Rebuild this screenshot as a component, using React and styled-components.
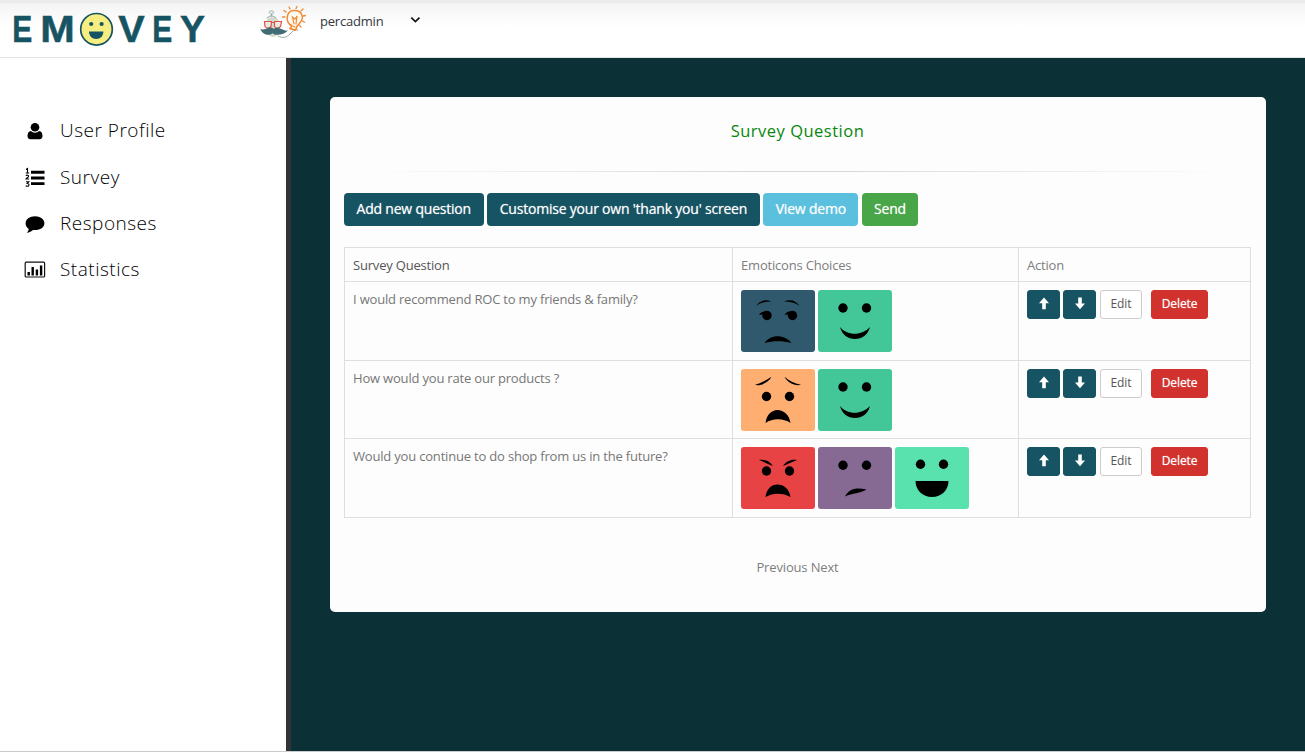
import React from "react";
import styled, { createGlobalStyle } from "styled-components";

const Global = createGlobalStyle`
  * { box-sizing: border-box; }
  html, body { margin: 0; padding: 0; background: #fff; overflow: hidden; }
  body { font-family: "Open Sans", "Noto Sans", sans-serif; font-size: 13px; color: #777; }
  button { font-family: inherit; margin: 0; cursor: pointer; }
  svg { display: block; flex: none; }
`;

const Page = styled.div`
  width: 1305px;
  height: 752px;
  display: flex;
  flex-direction: column;
  border-bottom: 1px solid #c8cacb;
`;

const Header = styled.header`
  height: 58px;
  flex: none;
  display: flex;
  align-items: flex-start;
  border-top: 3px solid #ebebeb;
  border-bottom: 1px solid #e2e3e3;
  background: linear-gradient(#f4f4f4, #ffffff 24px);
`;

const LogoBox = styled.div`
  width: 260px;
  padding: 5px 0 0 10px;
`;

const LogoText = styled.text`
  font-family: "Liberation Sans", Arial, sans-serif;
  font-weight: 700;
  font-size: 36px;
  fill: #175463;
  stroke: #175463;
  stroke-width: 0.5px;
`;

const Account = styled.div`
  display: flex;
  align-items: flex-start;
  color: #333640;
`;

const AccountName = styled.span`
  width: 90px;
  margin-left: 14px;
  padding-top: 9px;
  line-height: 18px;
  font-size: 13px;
  letter-spacing: -0.2px;
`;

const Chevron = styled.svg`
  margin-top: 13px;
`;

const Body = styled.div`
  flex: 1;
  display: flex;
  min-height: 0;
`;

const Sidebar = styled.nav`
  width: 291px;
  flex: none;
  padding: 50px 0 0 24px;
  border-right: 5px solid #313338;
  background: #fff;
`;

const MenuItem = styled.a`
  height: 46.4px;
  display: flex;
  align-items: center;
  gap: 14px;
  color: #000;
  font-size: 19px;
  font-weight: 300;
  letter-spacing: 0.5px;
  white-space: nowrap;
`;

const MenuLabel = styled.span`
  padding-bottom: 2px;
`;

const Main = styled.main`
  flex: 1;
  padding: 39px 39px 0;
  background: #0b3136;
`;

const Card = styled.section`
  width: 936px;
  height: 515px;
  padding: 24px 15px 0 14px;
  border-radius: 5px;
  background: #fdfdfd;
`;

const Title = styled.h1`
  margin: 0;
  font-size: 16.5px;
  line-height: 20px;
  font-weight: 400;
  letter-spacing: 0.5px;
  text-align: center;
  color: #0a860f;
`;

const Divider = styled.div`
  height: 1px;
  margin: 30px 0 21px;
  background: linear-gradient(to right, transparent 2%, #d8d8d8 45%, #d8d8d8 55%, transparent 98%);
`;

const Toolbar = styled.div`
  display: flex;
  gap: 3.5px;
`;

const ToolButton = styled.button`
  width: ${(p) => p.$w}px;
  height: 33px;
  padding: 0 0 3px;
  border: 0;
  border-radius: 4px;
  background: ${(p) => p.$bg};
  color: #fff;
  font-size: 14px;
  letter-spacing: -0.21px;
  white-space: nowrap;
  text-shadow: 0 0 1px rgba(255, 255, 255, 0.6);
`;

const Table = styled.table`
  width: 907px;
  margin-top: 21px;
  table-layout: fixed;
  border-collapse: collapse;
`;

const Row = styled.tr`
  height: ${(p) => p.$h}px;
`;

const Cell = styled.td`
  padding: 8px 8px 7px;
  border: 1px solid #dedede;
  vertical-align: top;
  line-height: 18px;
  letter-spacing: -0.19px;
  white-space: nowrap;
`;

const HeadCell = styled(Cell).attrs({ as: "th" })`
  font-weight: 400;
  text-align: left;
  color: ${(p) => (p.$dark ? "#555" : "#7d7d7d")};
`;

const Faces = styled.div`
  display: flex;
  gap: 3.5px;
`;

const FaceTile = styled.div`
  width: 73.7px;
  height: 62px;
  border-radius: 3px;
  overflow: hidden;
  background: ${(p) => p.$bg};
`;

const Actions = styled.div`
  display: flex;
  gap: 3px;
`;

const ActionButton = styled.button`
  width: ${(p) => p.$w}px;
  height: 29px;
  display: flex;
  align-items: center;
  justify-content: center;
  padding: 0 0 2px;
  margin-left: ${(p) => p.$gap || 0}px;
  border: 1px solid ${(p) => p.$line || p.$bg};
  border-radius: 3px;
  background: ${(p) => p.$bg};
  color: ${(p) => p.$fg || "#fff"};
  font-size: 12px;
  letter-spacing: -0.1px;
  text-shadow: ${(p) => (p.$fg ? "none" : "0 0 1px rgba(255,255,255,.6)")};
`;

const Pager = styled.div`
  margin-top: 40px;
  line-height: 18px;
  letter-spacing: -0.15px;
  text-align: center;
  color: #7d7d7d;
`;

function Logo() {
  const letters = [
    ["E", 12.3, 20],
    ["M", 40.2, 34.5],
    ["V", 118.2, 26.4],
    ["E", 152.3, 20],
    ["Y", 180.1, 25],
  ];
  return (
    <svg width="205" height="44" viewBox="10 8 205 44">
      {letters.map(([ch, x, w]) => (
        <LogoText key={x} x={x} y="42" textLength={w} lengthAdjust="spacingAndGlyphs">
          {ch}
        </LogoText>
      ))}
      <circle cx="96.5" cy="29.3" r="15.8" fill="#f6ee81" stroke="#175463" strokeWidth="1.7" />
      <circle cx="91.2" cy="24" r="2.1" fill="#175463" />
      <circle cx="101.6" cy="24" r="2.1" fill="#175463" />
      <path d="M89 31.5h14.4c0 4.5-3 7.5-7.2 7.5s-7.2-3-7.2-7.5z" fill="#175463" />
    </svg>
  );
}

function Avatar() {
  return (
    <svg width="46" height="37" viewBox="260 3 46 37" fill="none" strokeLinecap="round">
      <path d="M266 25c0-5 2-8 6-8s8 3 8 8v5c-1 4-4 7-7 7s-6-3-7-7z" fill="#d3dcc9" />
      <path d="M271.500 16v-2c-3-1-3-3 0-3s3 3 0 3M267 18l3-2h3l3 2" stroke="#8faaa8" strokeWidth="1" />
      <path d="M264.500 21.500h7l-.5 5c-2 2-5 2-6 0zM274.500 21.500h7l-1 5c-2 2-5 2-6 0zM271.500 22.500h3" fill="#e5eee2" stroke="#e2504e" strokeWidth="1.200" />
      <path d="M260.300 28.800c3 1.800 6-.6 9-1.100 2-.4 3.500.3 4.500 1.300 1-1 3-1.600 5-.9 3.500 1 6.500 3.600 9 2.200 0 0-3 5-11 4.400-2 0-3-.5-4-1.500-2 1.500-4 1.800-6 1.500-3-.4-5.500-2.500-6.500-5.900z" fill="#426c75" />
      <path d="M278 36c5 3 9 1 12-2s4-5 8-4" stroke="#91aaa8" />
      <path d="M291.500 25.500c-6-3-6-14 2-15 8-1 11 7 7 11.500-2 2-4 4-5 8l-5-1z" stroke="#ef8b37" strokeWidth="1.500" fill="#fffaf0" />
      <path d="M290 25l5 2M289.500 28l5.500 2M294 24l-1.500-7 2.500 2 2-3-1 8" stroke="#ef8b37" strokeWidth="1.200" />
      <path d="M290 9l-1-2M296 8.500l1-2M301 11l2-2M303 16l3-.5M302.500 21l2 1.200M286 12l-2-1.500M285 17h-2.500M299 25l2 2" stroke="#f08a35" strokeWidth="1.300" />
    </svg>
  );
}

const menuIcons = {
  user: (
    <g>
      <circle cx="11" cy="7.300" r="4.300" />
      <path d="M7 11c1 1.100 2.300 1.700 4 1.700s3-.6 4-1.700c2.500.2 3.500 2.300 3.500 5.100 0 2-1 3.100-2.800 3.100H6.300c-1.800 0-2.800-1.100-2.800-3.100C3.500 13.300 4.500 11.200 7 11z" />
    </g>
  ),
  list: (
    <g>
      <path d="M7 3.800h13.500v2.900H7zM7 9.500h13.500v2.900H7zM7 15.200h13.500v2.900H7z" />
      <path
        d="M2 2.500l1.500-1V6M1.800 6h3.400M1.800 8.700c1-.9 2.800-.6 2.800.6 0 1.200-2.700 1.600-2.700 2.700h3.200M2 14.700h2.800l-1.500 1.700c2.500 0 2 2.900.1 2.900-.7 0-1.200-.2-1.700-.5"
        fill="none"
        stroke="#000"
        strokeWidth="1.100"
      />
    </g>
  ),
  comment: (
    <path d="M11 3.300c5.300 0 9.400 3 9.400 6.900s-4.100 6.900-9.400 6.900c-.7 0-1.400-.1-2-.2-1.600 1.500-3.500 2.500-6.200 2.800 1-1 1.700-2.200 1.900-3.800C2.700 14.600 1.600 12.600 1.600 10.200 1.600 6.300 5.700 3.300 11 3.300z" />
  ),
  chart: (
    <g>
      <rect x="1.200" y="3.200" width="19.400" height="14.800" rx="1" fill="none" stroke="#111" strokeWidth="1.200" />
      <path d="M3.500 13h2.400v3.500H3.500zM7.500 8h2.400v8.500H7.500zM11.700 10.500h2.400v6h-2.400zM15.900 6.500h2.400v10h-2.400z" />
    </g>
  ),
};

const menu = [
  ["user", "User Profile"],
  ["list", "Survey"],
  ["comment", "Responses"],
  ["chart", "Statistics"],
];

const faces = {
  smirk: {
    bg: "#31596d",
    art: (
      <g>
        <path d="M15 16c4-6 10-7 15.500-4.500C25 11.500 19 12.500 15 16zM43 11.500C49 9 55 10 58.500 16 54 12.500 49 11.500 43 11.500z" />
        <circle cx="26" cy="25.500" r="4.700" />
        <circle cx="51.500" cy="25.500" r="4.700" />
        <path d="M18 25c2-3.500 5-4 9-3.500l-3 4.500c-1-1.500-3-2-6-1zM43.500 25c2-3.500 5-4 9-3.500l-3 4.500c-1-1.500-3-2-6-1z" />
        <path d="M23.500 53C29 44 44 44 50.500 53 42 50.500 32 50.500 23.500 53z" />
      </g>
    ),
  },
  smile: {
    bg: "#43c799",
    art: (
      <g>
        <circle cx="25" cy="18" r="4.700" />
        <circle cx="48.500" cy="18" r="4.700" />
        <path d="M22 37c7 9 22 9 30 0-2 8-8 12-15 12s-13-4-15-12z" />
      </g>
    ),
  },
  worried: {
    bg: "#ffae71",
    art: (
      <g>
        <path d="M14 15.800c6-1.500 11-4.500 16.500-8C28 13 20 17.500 14 15.800zM43.500 7.800C48 11.500 53 14.500 60 15.800c-6 1.700-14-2.500-16.500-8z" />
        <circle cx="25.500" cy="27.500" r="4.700" />
        <circle cx="48.500" cy="27.500" r="4.700" />
        <path d="M24.500 54c1-8 6-13 12-13s12 5 13 13c-7-5-18-5-25 0z" />
      </g>
    ),
  },
  angry: {
    bg: "#e84344",
    art: (
      <g>
        <path d="M18 13c6-1 11.500 1.500 13.800 6C27 17 23 15 18 13zM42.200 19c2.300-4.500 8-7 13.800-6-5 2-9 4-13.800 6z" />
        <circle cx="25.500" cy="24" r="4.700" />
        <circle cx="48.500" cy="24" r="4.700" />
        <path d="M24.500 50c1-8 6-12.500 12-12.500s12 4.500 13 12.500c-7-4.500-18-4.500-25 0z" />
      </g>
    ),
  },
  unsure: {
    bg: "#866a94",
    art: (
      <g>
        <circle cx="25" cy="18.200" r="4.700" />
        <circle cx="48.500" cy="18.200" r="4.700" />
        <path d="M27 49.500c4-8 11-9.500 21.500-7-6 4-14 3.500-21.500 7z" />
      </g>
    ),
  },
  laugh: {
    bg: "#5ae2ae",
    art: (
      <g>
        <circle cx="25.500" cy="17.200" r="4.700" />
        <circle cx="48.500" cy="17.200" r="4.700" />
        <path d="M20.500 34h33c0 9-7 16-16.500 16s-16.500-7-16.500-16z" />
      </g>
    ),
  },
};

const questions = [
  { text: "I would recommend ROC to my friends & family?", h: 79, faces: ["smirk", "smile"] },
  { text: "How would you rate our products ?", h: 78, faces: ["worried", "smile"] },
  { text: "Would you continue to do shop from us in the future?", h: 79, faces: ["angry", "unsure", "laugh"] },
];

function Arrow({ down }) {
  return (
    <svg width="12" height="13" viewBox="0 0 12 13" fill="#fff">
      <path d={down ? "M4.200.500h3.600v6H11L6 12.300 1 6.500h3.200z" : "M4.200 12.300h3.600v-6H11L6 .5 1 6.300h3.200z"} />
    </svg>
  );
}

export default function App() {
  return (
    <>
      <Global />
      <Page>
        <Header>
          <LogoBox>
            <Logo />
          </LogoBox>
          <Account>
            <Avatar />
            <AccountName>percadmin</AccountName>
            <Chevron width="11" height="8" viewBox="0 0 11 8" fill="none">
              <path d="M1.300 1.600l4.100 4 4.100-4" stroke="#16171f" strokeWidth="1.800" />
            </Chevron>
          </Account>
        </Header>
        <Body>
          <Sidebar>
            {menu.map(([icon, label]) => (
              <MenuItem key={label}>
                <svg width="22" height="22" viewBox="0 0 22 22">
                  {menuIcons[icon]}
                </svg>
                <MenuLabel>{label}</MenuLabel>
              </MenuItem>
            ))}
          </Sidebar>
          <Main>
            <Card>
              <Title>Survey Question</Title>
              <Divider />
              <Toolbar>
                <ToolButton $w={139.5} $bg="#175463">Add new question</ToolButton>
                <ToolButton $w={272.8} $bg="#175463">Customise your own 'thank you' screen</ToolButton>
                <ToolButton $w={95} $bg="#5bc0de">View demo</ToolButton>
                <ToolButton $w={56.5} $bg="#48a548">Send</ToolButton>
              </Toolbar>
              <Table>
                <colgroup>
                  <col width="388" />
                  <col width="286" />
                  <col width="232" />
                </colgroup>
                <thead>
                  <Row $h={34}>
                    <HeadCell $dark>Survey Question</HeadCell>
                    <HeadCell>Emoticons Choices</HeadCell>
                    <HeadCell>Action</HeadCell>
                  </Row>
                </thead>
                <tbody>
                  {questions.map((q) => (
                    <Row key={q.text} $h={q.h}>
                      <Cell>{q.text}</Cell>
                      <Cell>
                        <Faces>
                          {q.faces.map((name) => (
                            <FaceTile key={name} $bg={faces[name].bg}>
                              <svg width="74" height="62" viewBox="0 0 74 62">
                                {faces[name].art}
                              </svg>
                            </FaceTile>
                          ))}
                        </Faces>
                      </Cell>
                      <Cell>
                        <Actions>
                          <ActionButton $w={33} $bg="#175463"><Arrow /></ActionButton>
                          <ActionButton $w={33} $bg="#175463"><Arrow down /></ActionButton>
                          <ActionButton $w={42} $bg="#fff" $line="#ccc" $fg="#555" $gap={0.9}>Edit</ActionButton>
                          <ActionButton $w={57} $bg="#d2322d" $gap={6.2}>Delete</ActionButton>
                        </Actions>
                      </Cell>
                    </Row>
                  ))}
                </tbody>
              </Table>
              <Pager>Previous Next</Pager>
            </Card>
          </Main>
        </Body>
      </Page>
    </>
  );
}
